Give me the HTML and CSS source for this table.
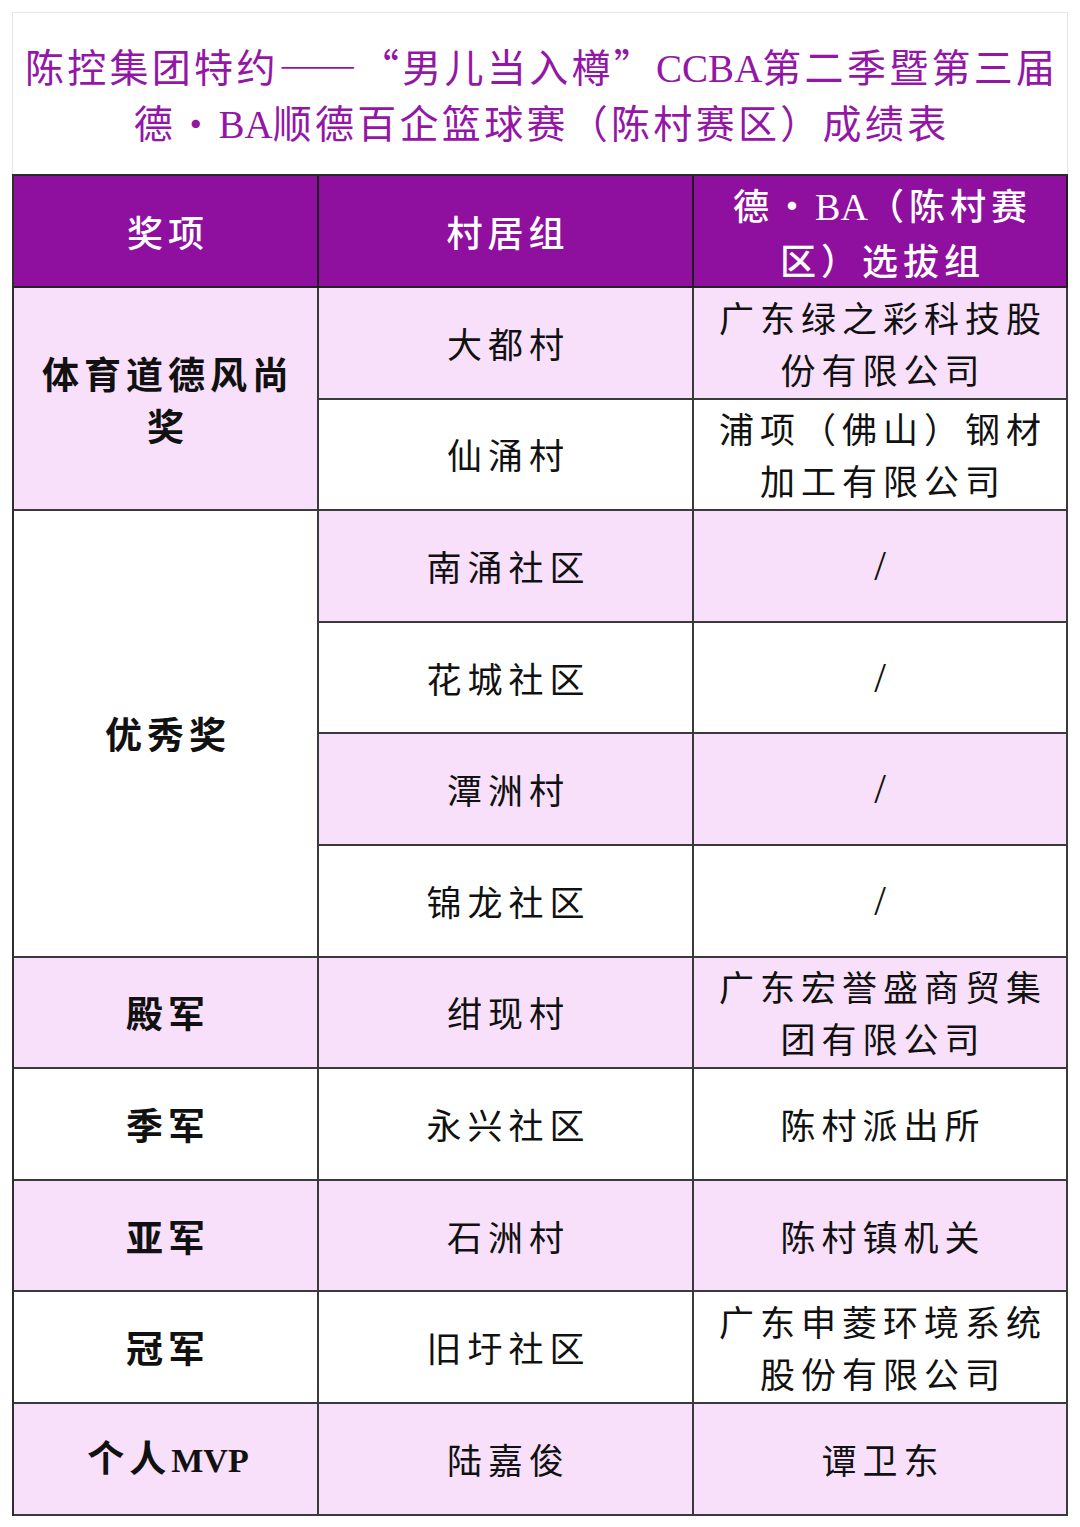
FILE: index.html
```html
<!DOCTYPE html>
<html lang="zh-CN">
<head>
<meta charset="utf-8">
<title>成绩表</title>
<link rel="stylesheet" href="styles.css">
</head>
<body>
<div class="sheet">
  <div class="title-box">
    <h1 class="title">陈控集团特约——“男儿当入樽”<span class="lat">CCBA</span>第二季暨第三届<br>德·<span class="lat">BA</span>顺德百企篮球赛（陈村赛区）成绩表</h1>
  </div>
  <table class="results">
    <colgroup>
      <col class="c1">
      <col class="c2">
      <col class="c3">
    </colgroup>
    <thead>
      <tr class="head-row">
        <th>奖项</th>
        <th>村居组</th>
        <th>德·<span class="lat">BA</span>（陈村赛<br>区）选拔组</th>
      </tr>
    </thead>
    <tbody>
      <tr class="pink">
        <td class="award" rowspan="2">体育道德风尚<br>奖</td>
        <td>大都村</td>
        <td>广东绿之彩科技股<br>份有限公司</td>
      </tr>
      <tr class="white">
        <td>仙涌村</td>
        <td>浦项（佛山）钢材<br>加工有限公司</td>
      </tr>
      <tr class="pink">
        <td class="award white-cell" rowspan="4">优秀奖</td>
        <td>南涌社区</td>
        <td class="slash">/</td>
      </tr>
      <tr class="white">
        <td>花城社区</td>
        <td class="slash">/</td>
      </tr>
      <tr class="pink">
        <td>潭洲村</td>
        <td class="slash">/</td>
      </tr>
      <tr class="white">
        <td>锦龙社区</td>
        <td class="slash">/</td>
      </tr>
      <tr class="pink">
        <td class="award">殿军</td>
        <td>绀现村</td>
        <td>广东宏誉盛商贸集<br>团有限公司</td>
      </tr>
      <tr class="white">
        <td class="award">季军</td>
        <td>永兴社区</td>
        <td>陈村派出所</td>
      </tr>
      <tr class="pink">
        <td class="award">亚军</td>
        <td>石洲村</td>
        <td>陈村镇机关</td>
      </tr>
      <tr class="white">
        <td class="award">冠军</td>
        <td>旧圩社区</td>
        <td>广东申菱环境系统<br>股份有限公司</td>
      </tr>
      <tr class="pink">
        <td class="award">个人<span class="lat">MVP</span></td>
        <td>陆嘉俊</td>
        <td>谭卫东</td>
      </tr>
    </tbody>
  </table>
</div>
</body>
</html>
```

FILE: styles.css
```css
html, body {
  margin: 0;
  padding: 0;
  background: #ffffff;
}

body {
  padding: 12px;
  font-family: "Noto Sans CJK SC", "Noto Sans", sans-serif;
}

.sheet {
  width: 1056px;
}

.title-box {
  box-sizing: border-box;
  height: 162px;
  border: 1px solid #e6e6e6;
  border-bottom: none;
  display: flex;
  align-items: center;
  justify-content: center;
  padding-top: 2px;
}

.title {
  margin: 0;
  font-size: 39px;
  font-weight: 400;
  line-height: 53px;
  letter-spacing: 3.3px;
  color: #9416a7;
  text-align: center;
  white-space: nowrap;
  padding-left: 3.3px;
}

.lat {
  font-family: "Liberation Serif", serif;
  letter-spacing: 0;
}

.title .lat {
  font-size: 39px;
  letter-spacing: 0;
}

.results {
  width: 1056px;
  table-layout: fixed;
  border-collapse: separate;
  border-spacing: 0;
  border-left: 2px solid #2e2e2e;
  border-top: 2px solid #2a2a2a;
}

.c1 { width: 305px; }
.c2 { width: 375px; }
.c3 { width: 374px; }

.results th,
.results td {
  border-right: 2px solid #3a3a3a;
  border-bottom: 2px solid #3a3a3a;
  text-align: center;
  vertical-align: middle;
  padding: 0 0 0 6px;
  font-size: 35px;
  line-height: 52px;
  letter-spacing: 6px;
  color: #111111;
  font-weight: 400;
}

.head-row {
  height: 112px;
}

.head-row th {
  background: #8f0f9f;
  color: #ffffff;
  font-size: 36px;
  font-weight: 500;
  letter-spacing: 5px;
  padding-left: 5px;
  line-height: 52px;
  border-bottom-color: #222;
  border-right-color: #1e1e1e;
}

.head-row th .lat {
  font-size: 38px;
}

tbody tr {
  height: 111.6px;
}

tr.pink td {
  background: #f8e0fb;
}

tr.white td {
  background: #ffffff;
}

tr.pink td.white-cell {
  background: #ffffff;
}

.results td.award {
  font-size: 37px;
  font-weight: 700;
  letter-spacing: 5px;
  padding-left: 5px;
}

.results td.award .lat {
  font-size: 34px;
  letter-spacing: 0;
}

.results td.slash {
  font-family: "Liberation Serif", serif;
  font-size: 42px;
  letter-spacing: 0;
  padding-left: 0;
}
```
